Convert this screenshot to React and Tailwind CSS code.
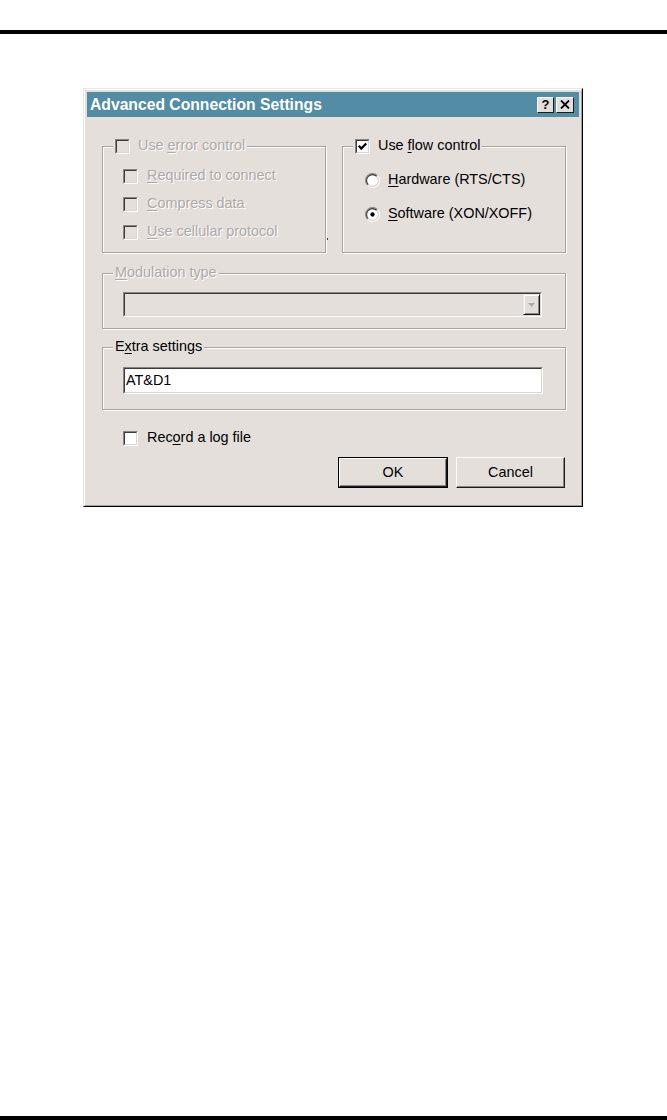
import React from "react";

const face = "bg-[#e5dfdc]";
const dis = "text-[#aea9a6] [text-shadow:1px_1px_0_#ffffff]";

const U = ({children}) => <span className="underline decoration-1 underline-offset-[2px]">{children}</span>;

const CheckBox = ({checked, disabled}) => (
    <span className="inline-flex w-[15px] h-[15px] shrink-0 border border-t-[#8a8582] border-l-[#8a8582] border-r-white border-b-white">
        <span className={`flex flex-1 items-center justify-center border border-t-[#3d3b3a] border-l-[#3d3b3a] border-r-[#dcd6d3] border-b-[#dcd6d3] ${disabled ? face : 'bg-white'}`}>
            {checked && (
                <svg width="11" height="11" viewBox="0 0 11 11">
                    <path d="M1.8 4.8 L4.3 7.6 L9.2 2.4" stroke="#000" strokeWidth="2.2" fill="none"/>
                </svg>
            )}
        </span>
    </span>
);

const Radio = ({checked}) => (
    <svg width="15" height="15" viewBox="0 0 14 14" className="shrink-0">
        <circle cx="7" cy="7" r="5" fill="#fff"/>
        <path d="M2.4 11.6 A6.5 6.5 0 0 1 11.6 2.4" stroke="#8a8582" fill="none"/>
        <path d="M11.6 2.4 A6.5 6.5 0 0 1 2.4 11.6" stroke="#fff" fill="none"/>
        <path d="M3.1 10.9 A5.5 5.5 0 0 1 10.9 3.1" stroke="#3d3b3a" fill="none"/>
        <path d="M10.9 3.1 A5.5 5.5 0 0 1 3.1 10.9" stroke="#dcd6d3" fill="none"/>
        {checked && <circle cx="7" cy="7" r="2" fill="#000"/>}
    </svg>
);

const Group = ({legend, className, children}) => (
    <div className={`relative border border-[#a9a4a1] shadow-[inset_1px_1px_0_#ffffff,1px_1px_0_#ffffff] ${className}`}>
        <div className={`absolute left-[10px] -top-[10px] flex h-[18px] items-center gap-[8px] px-[2px] ${face}`}>
            {legend}
        </div>
        {children}
    </div>
);

const Item = ({children, className}) => (
    <div className={`flex items-center ${className}`}>{children}</div>
);

const App = () => {
    return (
        <div className="flex h-[1120px] w-[667px] flex-col bg-white text-[14.4px] text-black" style={{fontFamily: '"Liberation Sans", Arial, sans-serif'}}>
            <div className="mt-[30px] h-[4px] bg-black"/>

            <div className={`ml-[83px] mt-[54px] h-[419px] w-[500px] border border-t-[#ebe7e4] border-l-[#ebe7e4] border-r-black border-b-black ${face}`}>
                <div className="flex h-full flex-col border border-t-white border-l-white border-r-[#a6a19e] border-b-[#a6a19e] p-[2px]">
                    <div className="flex h-[25px] shrink-0 items-center bg-[#528ca5] pl-[3px] pr-[5px]">
                        <span className="flex-1 text-[15.7px] font-bold text-white">Advanced Connection Settings</span>
                        <div className="flex gap-[2px]">
                            <div className="flex h-[16px] w-[17px] items-center justify-center border border-t-white border-l-white border-r-[#1c1b1b] border-b-[#1c1b1b] bg-[#e5dfdc] text-[13px] font-bold leading-none">?</div>
                            <div className="flex h-[16px] w-[18px] items-center justify-center border border-t-white border-l-white border-r-[#1c1b1b] border-b-[#1c1b1b] bg-[#e5dfdc]">
                                <svg width="10" height="9" viewBox="0 0 10 9">
                                    <path d="M1 0.5 L9 8.5 M9 0.5 L1 8.5" stroke="#000" strokeWidth="1.8"/>
                                </svg>
                            </div>
                        </div>
                    </div>

                    <div className="flex flex-1 flex-col pl-[15px] pr-[13px] pt-[29px]">
                        <div className="relative flex gap-[16px]">
                            <Group
                                className="h-[107px] w-[224px] pt-[15px]"
                                legend={<>
                                    <CheckBox disabled/>
                                    <span className={dis}>Use <U>e</U>rror control</span>
                                </>}
                            >
                                <Item className="h-[28px] gap-[9px] pl-[20px]"><CheckBox disabled/><span className={dis}><U>R</U>equired to connect</span></Item>
                                <Item className="h-[28px] gap-[9px] pl-[20px]"><CheckBox disabled/><span className={dis}><U>C</U>ompress data</span></Item>
                                <Item className="h-[28px] gap-[9px] pl-[20px]"><CheckBox disabled/><span className={dis}><U>U</U>se cellular protocol</span></Item>
                            </Group>
                            <span className="absolute left-[225px] top-[92px] h-[2px] w-[1px] bg-[#3d3b3a]"/>
                            <Group
                                className="h-[107px] w-[224px] pt-[16px]"
                                legend={<>
                                    <CheckBox checked/>
                                    <span>Use <U>f</U>low control</span>
                                </>}
                            >
                                <Item className="h-[34px] gap-[8px] pl-[22px]"><Radio/><span><U>H</U>ardware (RTS/CTS)</span></Item>
                                <Item className="h-[34px] gap-[8px] pl-[22px]"><Radio checked/><span><U>S</U>oftware (XON/XOFF)</span></Item>
                            </Group>
                        </div>

                        <Group
                            className="mt-[20px] h-[56px] pl-[20px] pr-[23px] pt-[18px]"
                            legend={<span className={dis}><U>M</U>odulation type</span>}
                        >
                            <div className="flex h-[25px] border border-t-[#8a8582] border-l-[#8a8582] border-r-white border-b-white">
                                <div className="flex flex-1 justify-end border border-t-[#3d3b3a] border-l-[#3d3b3a] border-r-[#dcd6d3] border-b-[#dcd6d3] bg-[#e5dfdc]">
                                    <div className="flex w-[17px] items-center justify-center border border-t-[#ebe7e4] border-l-[#ebe7e4] border-r-[#1c1b1b] border-b-[#1c1b1b] shadow-[inset_1px_1px_0_#ffffff,inset_-1px_-1px_0_#8a8582]">
                                        <svg width="7" height="4" viewBox="0 0 7 4"><path d="M0 0 H7 L3.5 4 Z" fill="#aea9a6"/></svg>
                                    </div>
                                </div>
                            </div>
                        </Group>

                        <Group
                            className="mt-[18px] h-[63px] pl-[20px] pr-[22px] pt-[19px]"
                            legend={<span>E<U>x</U>tra settings</span>}
                        >
                            <div className="flex h-[27px] border border-t-[#8a8582] border-l-[#8a8582] border-r-white border-b-white">
                                <div className="flex flex-1 items-center border border-t-[#3d3b3a] border-l-[#3d3b3a] border-r-[#dcd6d3] border-b-[#dcd6d3] bg-white pl-[1px]">
                                    AT&amp;D1
                                </div>
                            </div>
                        </Group>

                        <Item className="mt-[18px] h-[20px] gap-[9px] pl-[21px]">
                            <CheckBox/>
                            <span>Rec<U>o</U>rd a log file</span>
                        </Item>

                        <div className="mt-[9px] flex justify-end gap-[8px] pr-[1px]">
                            <div className="flex h-[31px] w-[110px] border border-black">
                                <div className="flex flex-1 items-center justify-center border border-t-white border-l-white border-r-[#1c1b1b] border-b-[#1c1b1b] shadow-[inset_-1px_-1px_0_#8a8582]">
                                    OK
                                </div>
                            </div>
                            <div className="flex h-[31px] w-[109px] items-center justify-center border border-t-white border-l-white border-r-[#1c1b1b] border-b-[#1c1b1b] shadow-[inset_-1px_-1px_0_#8a8582]">
                                Cancel
                            </div>
                        </div>
                    </div>
                </div>
            </div>

            <div className="mt-auto h-[4px] bg-black"/>
        </div>
    );
};

export default App;
